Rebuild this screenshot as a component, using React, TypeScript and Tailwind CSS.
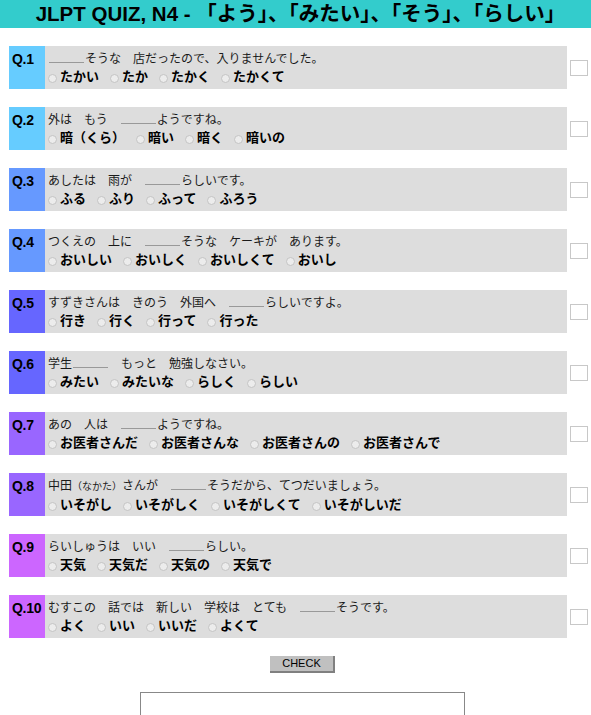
import React from "react";

const JP = { fontFamily: '"Liberation Sans", "Noto Sans CJK JP", sans-serif' };

type Q = { label: string; color: string; q: React.ReactNode; opts: string[] };

const Blank = () => (
  <span className="inline-block w-[35px] h-[12px] border-b border-[#999] align-baseline mx-[1px]" />
);

const questions: Q[] = [
  { label: "Q.1", color: "bg-[#66ccff]", q: <><Blank />そうな　店だったので、入りませんでした。</>, opts: ["たかい", "たか", "たかく", "たかくて"] },
  { label: "Q.2", color: "bg-[#66ccff]", q: <>外は　もう　<Blank />ようですね。</>, opts: ["暗（くら）", "暗い", "暗く", "暗いの"] },
  { label: "Q.3", color: "bg-[#6699ff]", q: <>あしたは　雨が　<Blank />らしいです。</>, opts: ["ふる", "ふり", "ふって", "ふろう"] },
  { label: "Q.4", color: "bg-[#6699ff]", q: <>つくえの　上に　<Blank />そうな　ケーキが　あります。</>, opts: ["おいしい", "おいしく", "おいしくて", "おいし"] },
  { label: "Q.5", color: "bg-[#6666ff]", q: <>すずきさんは　きのう　外国へ　<Blank />らしいですよ。</>, opts: ["行き", "行く", "行って", "行った"] },
  { label: "Q.6", color: "bg-[#6666ff]", q: <>学生<Blank />　もっと　勉強しなさい。</>, opts: ["みたい", "みたいな", "らしく", "らしい"] },
  { label: "Q.7", color: "bg-[#9966ff]", q: <>あの　人は　<Blank />ようですね。</>, opts: ["お医者さんだ", "お医者さんな", "お医者さんの", "お医者さんで"] },
  { label: "Q.8", color: "bg-[#9966ff]", q: <>中田<span className="text-[10px]">（なかた）</span>さんが　<Blank />そうだから、てつだいましょう。</>, opts: ["いそがし", "いそがしく", "いそがしくて", "いそがしいだ"] },
  { label: "Q.9", color: "bg-[#cc66ff]", q: <>らいしゅうは　いい　<Blank />らしい。</>, opts: ["天気", "天気だ", "天気の", "天気で"] },
  { label: "Q.10", color: "bg-[#cc66ff]", q: <>むすこの　話では　新しい　学校は　とても　<Blank />そうです。</>, opts: ["よく", "いい", "いいだ", "よくて"] },
];

export default function App() {
  return (
    <div className="w-[591px] min-h-[715px] bg-white text-black" style={JP}>
      <div className="h-[28px] bg-[#33cccc] flex items-center justify-center pl-[10px]">
        <h1 className="text-[20.5px] font-bold leading-none whitespace-nowrap">
          JLPT QUIZ, N4 - 「よう」、「みたい」、「そう」、「らしい」
        </h1>
      </div>
      <div className="flex flex-col gap-[18px] mt-[18px]">
        {questions.map((q) => (
          <div key={q.label} className="flex items-center">
            <div className="flex ml-[9px] w-[558px] h-[43px] bg-[#dddddd]">
              <div className={`${q.color} w-[36px] shrink-0 pl-[3px] pt-[4px] text-[14px] font-bold leading-[18px] tracking-[-0.3px]`}>
                {q.label}
              </div>
              <div className="pl-[3px] pt-[4px]">
                <div className="text-[12px] leading-[18px] text-[#1a1a1a] whitespace-nowrap">{q.q}</div>
                <div className="flex gap-[11px] text-[13px] font-bold leading-[18px] whitespace-nowrap">
                  {q.opts.map((o) => (
                    <span key={o} className="flex items-center">
                      <span className="inline-block w-[9px] h-[9px] rounded-full border border-[#c4c4c4] bg-[#ececec] mr-[3px] mt-[2px]" />
                      {o}
                    </span>
                  ))}
                </div>
              </div>
            </div>
            <div className="ml-[3px] w-[18px] h-[16px] border border-[#c8c8c8] bg-white" />
          </div>
        ))}
      </div>
      <div className="flex justify-center mt-[18px] pl-[14px]">
        <button className="w-[65px] h-[17px] bg-[#c0c0c0] border-r-2 border-b-2 border-[#808080] text-[11px] leading-none text-black" style={{ fontFamily: '"Liberation Sans", sans-serif' }}>
          CHECK
        </button>
      </div>
      <div className="flex justify-start mt-[19px]">
        <div className="ml-[140px] w-[325px] h-[40px] border border-[#888] border-b-0" />
      </div>
    </div>
  );
}
